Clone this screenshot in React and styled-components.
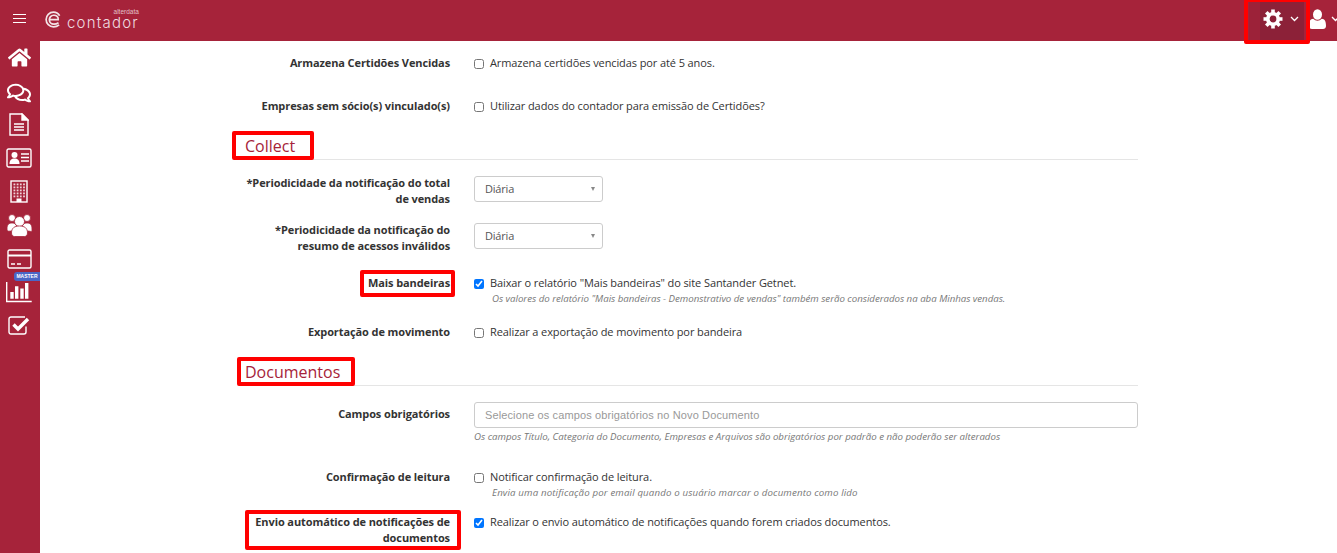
import React from "react";
import styled, { createGlobalStyle } from "styled-components";
import { FaHome, FaRegComments } from "react-icons/fa";

const Global = createGlobalStyle`
  html, body { margin: 0; padding: 0; background: #fff; }
  body { font-family: "Open Sans", "Noto Sans", sans-serif; overflow: hidden; height: 553px; }
`;
const Page = styled.div`width: 1337px; height: 553px; display: flex; flex-direction: column; overflow: hidden; position: relative;`;
const Topbar = styled.header`height: 41px; flex: none; background: #a6233a; display: flex; align-items: center; color: #fff;`;
const Burger = styled.button`width: 38px; height: 41px; border: 0; background: none; padding: 0 0 4px; display: flex; flex-direction: column; gap: 3.3px; align-items: center; justify-content: center; box-sizing: border-box;
  span { display: block; width: 13px; height: 1px; background: #fff; }`;
const Logo = styled.div`display: flex; align-items: flex-end; gap: 5px; position: relative; margin-left: 7px; height: 41px; padding-bottom: 13px; box-sizing: border-box;`;
const LogoWord = styled.span`font-family: "Inter", sans-serif; font-weight: 300; font-size: 15px; line-height: 11px; letter-spacing: 1.2px; color: #efdce0;`;
const LogoTiny = styled.span`position: absolute; right: 0; top: 10px; font-size: 6.5px; line-height: 4px; color: #e2c0c7; font-family: "Liberation Sans", sans-serif;`;
const TopRight = styled.div`margin-left: auto; display: flex; align-items: center; height: 41px; width: 88px; flex: none;`;
const GearBtn = styled.div`width: 55px; height: 41px; flex: none; display: flex; align-items: center; background: linear-gradient(90deg, #9c2239 0 11px, #8c2138 11px); padding: 0 0 4px 14px; box-sizing: border-box; gap: 7px;`;
const UserBtn = styled.div`flex: none; display: flex; align-items: center; gap: 5px; padding: 0 0 4px 5px; box-sizing: border-box;`;
const Highlight = styled.span`position: absolute; border: 4px solid #f00; border-radius: 2px; pointer-events: none; box-sizing: border-box;
  left: ${p => p.$l}px; top: ${p => p.$t}px; width: ${p => p.$w}px; height: ${p => p.$h}px;`;
const Body = styled.div`flex: 1; display: flex; min-height: 0;`;
const Sidebar = styled.nav`width: 40px; flex: none; background: #a6233a; display: flex; flex-direction: column; padding-right: 2px; box-sizing: border-box; color: #fff; position: relative;`;
const NavItem = styled.div`height: 33.5px; display: flex; justify-content: center; align-items: center; flex: none; padding-top: ${p => p.$pt || 0}px; box-sizing: border-box;`;
const Badge = styled.span`position: absolute; right: 0; top: 231px; width: 26px; height: 9px; background: #4a66c6; color: #fff; font-size: 5px; font-weight: 700; line-height: 9px; text-align: center; border-radius: 3px 0 0 3px; font-family: "Liberation Sans", sans-serif;`;
const Main = styled.main`flex: 1; padding: 0 199px 0 205px; min-width: 0;`;
const Row = styled.div`display: grid; grid-template-columns: 205px 1fr; column-gap: 24px; height: ${p => p.$h}px; padding-top: ${p => p.$pt || 0}px; box-sizing: border-box;`;
const Label = styled.label`font-size: 11px; line-height: 16px; font-weight: 700; color: #333; text-align: right; position: relative; letter-spacing: -0.1px; padding-top: ${p => p.$pt || 0}px;`;
const Check = styled.div`display: flex; align-items: flex-start; gap: 6px; font-size: 11px; line-height: 16px; color: #333; letter-spacing: -0.1px;
  input { width: 10px; height: 10px; margin: 4px 0 0; flex: none; }`;
const Hint = styled.div`font-size: 9.7px; line-height: 12px; font-style: italic; color: #777; letter-spacing: ${p => p.$ls ?? 0}px; margin-top: ${p => p.$mt ?? 2}px; padding-left: ${p => p.$pl ?? 18}px;`;
const Section = styled.h3`margin: ${p => p.$mt}px 0 0; font-weight: 400; font-size: 16px; line-height: 22px; color: #a6233a; border-bottom: 1px solid #e5e5e5; height: 28px; box-sizing: border-box; padding-top: 3px; position: relative;`;
const SelectBox = styled.div`width: 129px; height: 26px; margin-top: 1px; border: 1px solid #ccc; border-radius: 3px; box-sizing: border-box; display: flex; align-items: center; justify-content: space-between; padding: 0 7px 2px 10px; font-size: 11px; letter-spacing: -0.2px; color: #555;
  i { width: 0; height: 0; margin-top: 2px; border-left: 2.5px solid transparent; border-right: 2.5px solid transparent; border-top: 4px solid #888; }`;
const InputBox = styled.div`height: 26px; border: 1px solid #ccc; border-radius: 3px; box-sizing: border-box; display: flex; align-items: center; padding: 0 10px; font-family: "Liberation Sans", sans-serif; font-size: 11px; letter-spacing: .12px; color: #999;`;

const Svg = ({ w, h, vb, children }) => <svg width={w} height={h} viewBox={vb} fill="none" stroke="#fff" strokeWidth="1.4">{children}</svg>;

const LogoE = () => (
  <svg width="17" height="17" viewBox="0 0 18 18" fill="none" stroke="#f3e4e7" strokeWidth="1.8">
    <path d="M5 9.200h9c.3-2.800-1.800-4.700-4.700-4.700S4.600 6.600 4.600 9.300s2 4.700 4.900 4.700c1.800 0 3.300-.5 4.800-1.500" />
    <path d="M15.500 5C14 2.500 11.800 1.200 9 1.200 4.600 1.200 1.200 4.700 1.200 9s3.400 7.800 7.800 7.800c2.500 0 4.400-.8 6-2.100" />
  </svg>
);
const Gear = () => (
  <svg width="20" height="20" viewBox="0 0 20 20" fill="none" stroke="#fff">
    <circle cx="10" cy="10" r="5.200" strokeWidth="3.600" />
    {[0, 45, 90, 135, 180, 225, 270, 315].map(a => (
      <path key={a} d="M10 0.500v4" strokeWidth="3.600" transform={`rotate(${a} 10 10)`} />
    ))}
  </svg>
);
const Chevron = () => (
  <svg width="9" height="6" viewBox="0 0 9 6" fill="none" stroke="#fff" strokeWidth="1.300" style={{ flex: "none" }}>
    <path d="M1 1l3.500 3.500L8 1" />
  </svg>
);
const UserIcon = () => (
  <svg width="17" height="20" viewBox="0 0 17 20" fill="#fff" style={{ flex: "none" }}>
    <ellipse cx="8.500" cy="5.500" rx="4.500" ry="5.300" />
    <path d="M0 17c0-5 1.500-7 4.200-7.200C5.500 11 7 11.700 8.500 11.700s3-.7 4.300-1.900C15.500 10 17 12 17 17c0 2-1.300 3-3 3H3c-1.700 0-3-1-3-3z" />
  </svg>
);
const Doc = () => <Svg w={20} h={23} vb="0 0 20 23"><path d="M1 1h12l6 6v15H1z" /><path d="M13 1v6h6z" fill="#fff" /><path d="M5 11h10M5 14h10M5 17h10" strokeWidth="1.500" /></Svg>;
const IdCard = () => (
  <Svg w={26} h={20} vb="0 0 26 20">
    <rect x="1" y="1" width="24" height="18" rx="1.500" />
    <circle cx="8.500" cy="7" r="3" fill="#fff" stroke="none" />
    <path d="M3.500 16c0-4 2-5.500 5-5.500s5 1.500 5 5.500z" fill="#fff" stroke="none" />
    <path d="M15 6h8M15 9.500h8M15 13h8" strokeWidth="1.500" />
  </Svg>
);
const WINDOW_ROWS = [3.5, 6.5, 9.5, 12.5, 15.5];
const WINDOW_COLS = [3.5, 6.7, 9.9, 13.1];
const Building = () => (
  <Svg w={18} h={23} vb="0 0 18 23">
    <rect x="1" y="1" width="16" height="21" />
    {WINDOW_ROWS.map(y => WINDOW_COLS.map(x => (
      <rect key={`${x}-${y}`} x={x} y={y} width="1.800" height="1.800" fill="#f0d3d9" stroke="none" />
    )))}
    <path d="M6.500 22v-3.500h5V22" fill="#fff" stroke="none" />
  </Svg>
);
const People = () => (
  <svg width="25" height="23" viewBox="0 0 25 23" fill="#fff" stroke="#a6233a" strokeWidth="0.8">
    <circle cx="5" cy="4" r="3.500" />
    <circle cx="20" cy="4" r="3.500" />
    <path d="M0 15c0-4 1.500-6 5-6s5 2 5 6-2 2-5 2-5 1-5-2z" />
    <path d="M15 15c0-4 1.500-6 5-6s5 2 5 6 0 2-5 2-5 1-5-2z" />
    <circle cx="12.500" cy="7.500" r="5" />
    <path d="M4.500 19c0-5 3-7 8-7s8 2 8 7c0 2-1.500 3.500-3 3.500H7.500c-1.500 0-3-1.500-3-3.500z" />
  </svg>
);
const Card = () => (
  <Svg w={25} h={20} vb="0 0 25 20">
    <rect x="1" y="1" width="23" height="18" rx="1.500" />
    <path d="M1 6.500h23" strokeWidth="2" />
    <path d="M4 15h4M10 15h4" strokeWidth="1.500" />
  </Svg>
);
const Chart = () => (
  <Svg w={26} h={21} vb="0 0 26 21">
    <path d="M.7 0v19.500h25" />
    <path d="M6 16.800V10M10.700 16.800V4.300M16 16.800V6.600M20.700 16.800V1" strokeWidth="3.400" />
  </Svg>
);
const CheckSq = () => (
  <Svg w={22} h={19} vb="0 0 22 19">
    <path d="M18 10.500V16a2 2 0 0 1-2 2H3a2 2 0 0 1-2-2V3a2 2 0 0 1 2-2h14" />
    <path d="M5.500 8.500l4.500 4.500L20 3" strokeWidth="3.400" />
  </Svg>
);

const CheckRow = ({ h, checked, children, hint, hintLs, label, pt, highlight }) => (
  <Row $h={h} $pt={pt}>
    <Label>{highlight}{label}</Label>
    <div>
      <Check><input type="checkbox" readOnly checked={!!checked} />{children}</Check>
      {hint && <Hint $ls={hintLs}>{hint}</Hint>}
    </div>
  </Row>
);

export default function App() {
  return (
    <Page>
      <Global />
      <Topbar>
        <Burger aria-label="menu"><span /><span /><span /></Burger>
        <Logo><LogoE /><LogoWord>contador</LogoWord><LogoTiny>alterdata</LogoTiny></Logo>
        <TopRight>
          <GearBtn><Gear /><Chevron /></GearBtn>
          <UserBtn><UserIcon /><Chevron /></UserBtn>
        </TopRight>
      </Topbar>
      <Highlight $l={1244} $t={-2} $w={66} $h={46} />
      <Body>
        <Sidebar>
          <NavItem><FaHome size={23} /></NavItem>
          <NavItem $pt={3}><FaRegComments size={24} /></NavItem>
          <NavItem><Doc /></NavItem>
          <NavItem><IdCard /></NavItem>
          <NavItem><Building /></NavItem>
          <NavItem><People /></NavItem>
          <NavItem><Card /></NavItem>
          <NavItem><Chart /></NavItem>
          <NavItem><CheckSq /></NavItem>
          <Badge>MASTER</Badge>
        </Sidebar>
        <Main>
          <CheckRow h={49} pt={14} label="Armazena Certidões Vencidas">Armazena certidões vencidas por até 5 anos.</CheckRow>
          <CheckRow h={36} pt={8} label="Empresas sem sócio(s) vinculado(s)">Utilizar dados do contador para emissão de Certidões?</CheckRow>
          <Section $mt={6}>Collect<Highlight $l={-13} $t={-1} $w={82} $h={29} /></Section>
          <Row $h={62} $pt={15}>
            <Label>*Periodicidade da notificação do total de vendas</Label>
            <SelectBox>Diária<i /></SelectBox>
          </Row>
          <Row $h={53}>
            <Label>*Periodicidade da notificação do resumo de acessos inválidos</Label>
            <SelectBox>Diária<i /></SelectBox>
          </Row>
          <CheckRow h={49} checked label="Mais bandeiras" hintLs={-0.02}
            highlight={<Highlight $l={115} $t={-5} $w={95} $h={27} />}
            hint={<>Os valores do relatório "Mais bandeiras - Demonstrativo de vendas" também serão considerados na aba Minhas vendas.</>}>
            Baixar o relatório "Mais bandeiras" do site Santander Getnet.
          </CheckRow>
          <CheckRow h={25} label="Exportação de movimento">Realizar a exportação de movimento por bandeira</CheckRow>
          <Section $mt={9}>Documentos<Highlight $l={-8} $t={-1} $w={118} $h={29} /></Section>
          <Row $h={83} $pt={16}>
            <Label $pt={4}>Campos obrigatórios</Label>
            <div>
              <InputBox>Selecione os campos obrigatórios no Novo Documento</InputBox>
              <Hint $pl={0} $mt={3}>Os campos Título, Categoria do Documento, Empresas e Arquivos são obrigatórios por padrão e não poderão ser alterados</Hint>
            </div>
          </Row>
          <CheckRow h={45} label="Confirmação de leitura" hintLs={0.14}
            hint="Envia uma notificação por email quando o usuário marcar o documento como lido">
            Notificar confirmação de leitura.
          </CheckRow>
          <CheckRow h={40} checked label="Envio automático de notificações de documentos"
            highlight={<Highlight $l={0} $t={-4} $w={216} $h={40} />}>
            Realizar o envio automático de notificações quando forem criados documentos.
          </CheckRow>
        </Main>
      </Body>
    </Page>
  );
}
